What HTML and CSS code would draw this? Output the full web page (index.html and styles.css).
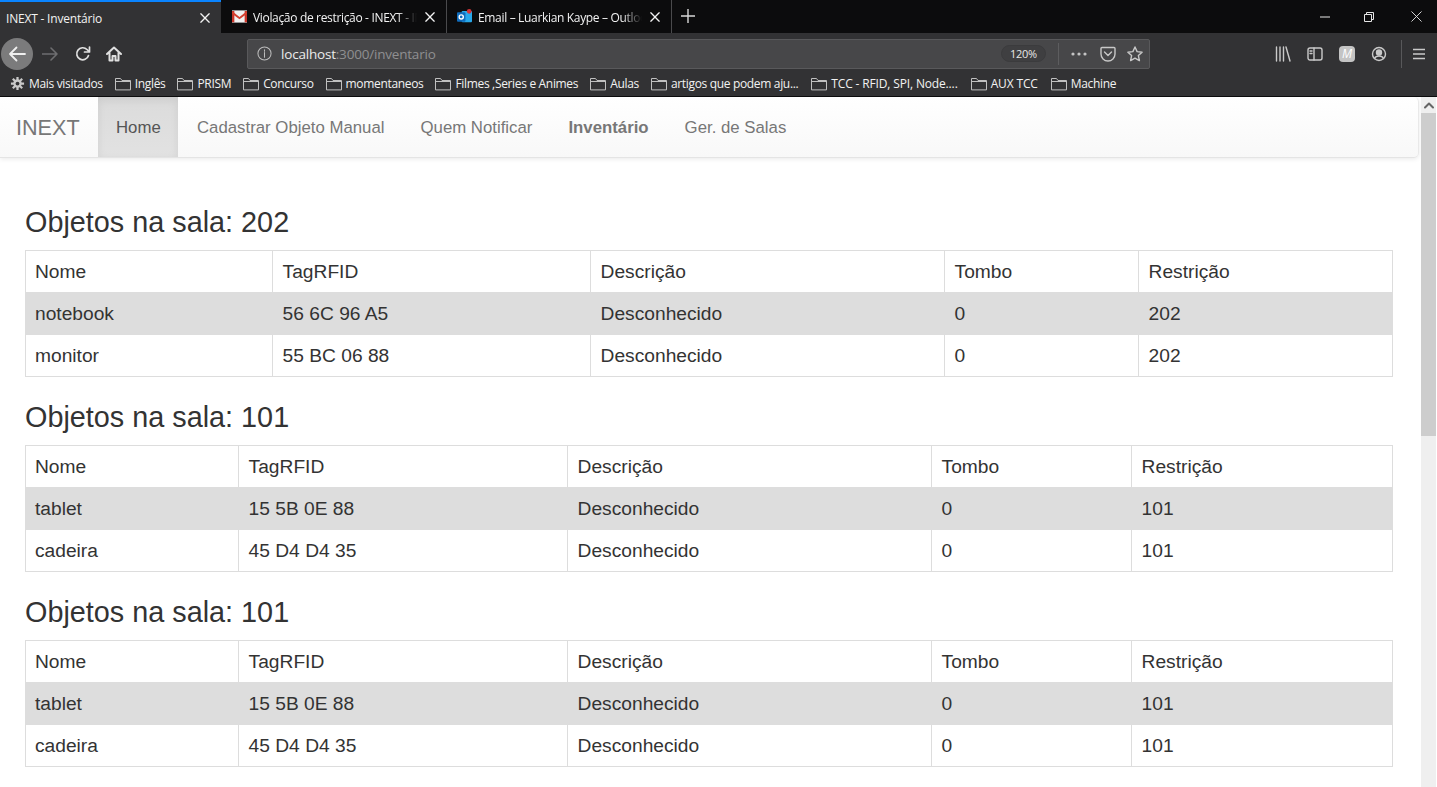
FILE: index.html
```html
<!DOCTYPE html>
<html lang="pt-BR">

<head>
    <meta charset="UTF-8">
    <title>INEXT - Inventário</title>
    <link rel="stylesheet" href="styles.css">
</head>

<body>
    <header class="browser">
        <div class="tabstrip">
            <div class="tab tab-active">
                <span class="tab-title">INEXT - Inventário</span>
                <svg class="tab-close" viewBox="0 0 12 12"><path d="M1 1l10 10M11 1L1 11"/></svg>
            </div>
            <div class="tab tab-second">
                <svg class="favicon" viewBox="0 0 16 14">
                    <rect width="16" height="13" y="0.5" fill="#f2f2f2"/>
                    <path d="M0 1h2.500v12H0zM13.500 1H16v12h-2.500z" fill="#c9362a"/>
                    <path d="M0 1l8 6.500L16 1v3L8 10 0 4z" fill="#d5402f"/>
                </svg>
                <span class="tab-title">Violação de restrição - INEXT - INEXT</span>
                <svg class="tab-close" viewBox="0 0 12 12"><path d="M1 1l10 10M11 1L1 11"/></svg>
            </div>
            <div class="tab tab-third">
                <svg class="favicon" viewBox="0 0 16 16">
                    <rect x="5" y="2" width="11" height="12" rx="1" fill="#28a8ea"/>
                    <rect x="0" y="3.500" width="9" height="10" rx="1" fill="#0f6cbd"/>
                    <circle cx="4.500" cy="8.500" r="2.200" fill="none" stroke="#fff" stroke-width="1.500"/>
                    <circle cx="13" cy="2.500" r="2.500" fill="#d13438"/>
                </svg>
                <span class="tab-title">Email – Luarkian Kaype – Outlook</span>
                <svg class="tab-close" viewBox="0 0 12 12"><path d="M1 1l10 10M11 1L1 11"/></svg>
            </div>
            <svg class="new-tab" viewBox="0 0 14 14"><path d="M7 0v14M0 7h14"/></svg>
            <div class="window-controls">
                <svg class="win-min" viewBox="0 0 10 10"><path d="M0 5h10"/></svg>
                <svg class="win-restore" viewBox="0 0 10 10"><path d="M.5 2.500h7v7h-7zM2.500 2.500v-2h7v7h-2"/></svg>
                <svg class="win-close" viewBox="0 0 12 12"><path d="M.5.5l11 11M11.500.5l-11 11"/></svg>
            </div>
        </div>

        <div class="toolbar">
            <div class="back-button">
                <svg viewBox="0 0 18 16"><path d="M17 8H2M8.500 1.500L2 8l6.500 6.500"/></svg>
            </div>
            <svg class="forward-icon" viewBox="0 0 16 14"><path d="M0 7h15M9 1l6 6-6 6"/></svg>
            <svg class="reload-icon" viewBox="0 0 16 16"><path d="M13.500 9.500A6 6 0 1 1 12 3.500L14 5.500M14.500 1v5h-5"/></svg>
            <svg class="home-icon" viewBox="0 0 16 16"><path d="M1 8l7-6.500L15 8M3.500 6.500V14.500H6.500V10h3v4.500h3V6.500"/></svg>

            <div class="urlbar">
                <svg class="info-icon" viewBox="0 0 16 16">
                    <circle cx="8" cy="8" r="7"/>
                    <path d="M8 7v5M8 4v1.500"/>
                </svg>
                <span class="url"><span class="url-host">localhost</span>:3000/inventario</span>
                <span class="zoom-badge">120%</span>
                <span class="urlbar-divider"></span>
                <svg class="dots-icon" viewBox="0 0 16 4">
                    <circle cx="2" cy="2" r="1.600"/><circle cx="8" cy="2" r="1.600"/><circle cx="14" cy="2" r="1.600"/>
                </svg>
                <svg class="pocket-icon" viewBox="0 0 16 16">
                    <path d="M1 2.500a1 1 0 0 1 1-1h12a1 1 0 0 1 1 1V8a7 7 0 0 1-14 0zM4.500 6L8 9.500 11.500 6"/>
                </svg>
                <svg class="star-icon" viewBox="0 0 16 16">
                    <path d="M8 1l2.100 4.600 5 .6-3.700 3.400 1 5L8 12.100 3.600 14.600l1-5L.9 6.200l5-.6z"/>
                </svg>
            </div>

            <div class="toolbar-right">
                <svg class="library-icon" viewBox="0 0 16 16"><path d="M1.500 1v14M5 1v14M8.500 1v14M11 1l4 14"/></svg>
                <svg class="sidebar-icon" viewBox="0 0 16 16">
                    <rect x="1" y="2" width="14" height="12" rx="2"/>
                    <path d="M7 2v12M3 5h2M3 7.500h2"/>
                </svg>
                <div class="avatar">M</div>
                <svg class="account-icon" viewBox="0 0 16 16">
                    <circle cx="8" cy="8" r="6.500"/>
                    <circle class="account-head" cx="8" cy="6.500" r="2.500"/>
                    <path d="M3.500 12.500c1-2 2.500-2.500 4.500-2.500s3.500.5 4.500 2.500"/>
                </svg>
                <span class="toolbar-divider"></span>
                <svg class="menu-icon" viewBox="0 0 12 12"><path d="M0 1.500h12M0 6h12M0 10.500h12"/></svg>
            </div>
        </div>

        <div class="bookmarks">
            <span class="bookmark">
                <svg class="gear-icon" viewBox="0 0 16 16">
                    <path d="M8 1v14M1 8h14M3 3l10 10M13 3L3 13"/>
                    <circle class="gear-body" cx="8" cy="8" r="4.500"/>
                    <circle class="gear-hole" cx="8" cy="8" r="2"/>
                </svg>Mais visitados
            </span>
            <span class="bookmark"><svg class="folder-icon" viewBox="0 0 16 14"><path d="M.5 12.500v-11h5l1.500 2h8.500v9zM.5 4.500h15"/></svg>Inglês</span>
            <span class="bookmark"><svg class="folder-icon" viewBox="0 0 16 14"><path d="M.5 12.500v-11h5l1.500 2h8.500v9zM.5 4.500h15"/></svg>PRISM</span>
            <span class="bookmark"><svg class="folder-icon" viewBox="0 0 16 14"><path d="M.5 12.500v-11h5l1.500 2h8.500v9zM.5 4.500h15"/></svg>Concurso</span>
            <span class="bookmark"><svg class="folder-icon" viewBox="0 0 16 14"><path d="M.5 12.500v-11h5l1.500 2h8.500v9zM.5 4.500h15"/></svg>momentaneos</span>
            <span class="bookmark"><svg class="folder-icon" viewBox="0 0 16 14"><path d="M.5 12.500v-11h5l1.500 2h8.500v9zM.5 4.500h15"/></svg>Filmes ,Series e Animes</span>
            <span class="bookmark"><svg class="folder-icon" viewBox="0 0 16 14"><path d="M.5 12.500v-11h5l1.500 2h8.500v9zM.5 4.500h15"/></svg>Aulas</span>
            <span class="bookmark"><svg class="folder-icon" viewBox="0 0 16 14"><path d="M.5 12.500v-11h5l1.500 2h8.500v9zM.5 4.500h15"/></svg>artigos que podem aju...</span>
            <span class="bookmark bookmark-gap bookmark-wide"><svg class="folder-icon" viewBox="0 0 16 14"><path d="M.5 12.500v-11h5l1.500 2h8.500v9zM.5 4.500h15"/></svg>TCC - RFID, SPI, Node....</span>
            <span class="bookmark bookmark-gap bookmark-wide"><svg class="folder-icon" viewBox="0 0 16 14"><path d="M.5 12.500v-11h5l1.500 2h8.500v9zM.5 4.500h15"/></svg>AUX TCC</span>
            <span class="bookmark bookmark-gap"><svg class="folder-icon" viewBox="0 0 16 14"><path d="M.5 12.500v-11h5l1.500 2h8.500v9zM.5 4.500h15"/></svg>Machine</span>
        </div>
    </header>

    <div class="viewport">
        <div class="page">
            <nav class="navbar">
                <a class="brand">INEXT</a>
                <a class="nav-link nav-current">Home</a>
                <a class="nav-link">Cadastrar Objeto Manual</a>
                <a class="nav-link">Quem Notificar</a>
                <a class="nav-link nav-bold">Inventário</a>
                <a class="nav-link">Ger. de Salas</a>
            </nav>

            <main class="content">
                <h3>Objetos na sala: 202</h3>
                <table class="room-table room-a">
                    <colgroup><col><col><col><col><col></colgroup>
                    <tr><td>Nome</td><td>TagRFID</td><td>Descrição</td><td>Tombo</td><td>Restrição</td></tr>
                    <tr><td>notebook</td><td>56 6C 96 A5</td><td>Desconhecido</td><td>0</td><td>202</td></tr>
                    <tr><td>monitor</td><td>55 BC 06 88</td><td>Desconhecido</td><td>0</td><td>202</td></tr>
                </table>

                <h3>Objetos na sala: 101</h3>
                <table class="room-table room-b">
                    <colgroup><col><col><col><col><col></colgroup>
                    <tr><td>Nome</td><td>TagRFID</td><td>Descrição</td><td>Tombo</td><td>Restrição</td></tr>
                    <tr><td>tablet</td><td>15 5B 0E 88</td><td>Desconhecido</td><td>0</td><td>101</td></tr>
                    <tr><td>cadeira</td><td>45 D4 D4 35</td><td>Desconhecido</td><td>0</td><td>101</td></tr>
                </table>

                <h3>Objetos na sala: 101</h3>
                <table class="room-table room-b">
                    <colgroup><col><col><col><col><col></colgroup>
                    <tr><td>Nome</td><td>TagRFID</td><td>Descrição</td><td>Tombo</td><td>Restrição</td></tr>
                    <tr><td>tablet</td><td>15 5B 0E 88</td><td>Desconhecido</td><td>0</td><td>101</td></tr>
                    <tr><td>cadeira</td><td>45 D4 D4 35</td><td>Desconhecido</td><td>0</td><td>101</td></tr>
                </table>
            </main>
        </div>

        <div class="scrollbar">
            <div class="scroll-up">
                <svg viewBox="0 0 10 8"><path d="M1 6.500l4-4 4 4"/></svg>
            </div>
            <div class="scroll-thumb"></div>
        </div>
    </div>
</body>

</html>
```

FILE: styles.css
```css
html,
body {
    margin: 0;
    height: 100%;
    overflow: hidden;
}

body {
    display: flex;
    flex-direction: column;
    background-color: #fff;
    font-family: "Liberation Sans", Arial, sans-serif;
}

svg {
    display: block;
    flex: none;
    fill: none;
    stroke-linecap: round;
    stroke-linejoin: round;
}

/* browser chrome */

.browser {
    flex: none;
    height: 97px;
    box-sizing: border-box;
    border-bottom: 1px solid #0c0c0d;
    background-color: #323234;
    font-family: "Open Sans", sans-serif;
    color: #f2f2f2;
}

.tabstrip {
    display: flex;
    align-items: stretch;
    height: 33px;
    background-color: #0c0c0d;
}

.tab {
    display: flex;
    align-items: center;
    box-sizing: border-box;
    font-size: 12px;
    letter-spacing: -0.33px;
}

.tab-active {
    width: 221px;
    padding: 0 11px 0 6px;
    border-top: 2px solid #0a84ff;
    background-color: #323234;
    letter-spacing: -0.2px;
}

.tab-second {
    width: 226px;
    padding: 0 11px 0 11px;
    border-right: 1px solid #4a4a4c;
}

.tab-third {
    width: 225px;
    padding: 0 11px 0 10px;
    border-right: 1px solid #4a4a4c;
}

.tab-title {
    flex: 1;
    min-width: 0;
    overflow: hidden;
    white-space: nowrap;
    padding-top: 1px;
}

.tab-second .tab-title,
.tab-third .tab-title {
    -webkit-mask-image: linear-gradient(to right, #000 88%, transparent 100%);
    mask-image: linear-gradient(to right, #000 88%, transparent 100%);
}

.favicon {
    width: 15px;
    height: 15px;
    margin-right: 6px;
}

.tab-close {
    width: 10px;
    height: 10px;
    margin-left: 8px;
    stroke: #f2f2f2;
    stroke-width: 1.6;
}

.new-tab {
    width: 14px;
    height: 14px;
    margin: 9px 0 0 9px;
    stroke: #d8d8d8;
    stroke-width: 1.4;
}

.window-controls {
    display: flex;
    align-items: center;
    margin-left: auto;
    padding-right: 15px;
}

.window-controls svg {
    stroke: #e6e6e6;
    stroke-width: 1;
    stroke-linecap: butt;
    stroke-linejoin: miter;
}

.win-min {
    width: 10px;
    height: 10px;
}

.win-restore {
    width: 10px;
    height: 10px;
    margin-left: 34px;
}

.win-close {
    width: 11px;
    height: 11px;
    margin-left: 37px;
}

.toolbar {
    display: flex;
    align-items: center;
    box-sizing: border-box;
    height: 38px;
    padding-top: 3px;
}

.back-button {
    display: flex;
    align-items: center;
    justify-content: center;
    width: 32px;
    height: 32px;
    margin-left: 1px;
    border-radius: 50%;
    background-color: #7b7b7c;
}

.back-button svg {
    width: 18px;
    height: 16px;
    stroke: #f0f0f0;
    stroke-width: 1.8;
}

.forward-icon {
    width: 16px;
    height: 14px;
    margin-left: 9px;
    stroke: #6e6e70;
    stroke-width: 1.6;
}

.reload-icon {
    width: 16px;
    height: 16px;
    margin-left: 17px;
    stroke: #e0e0e0;
    stroke-width: 1.7;
}

.home-icon {
    width: 16px;
    height: 16px;
    margin-left: 15px;
    stroke: #e0e0e0;
    stroke-width: 2;
}

.urlbar {
    display: flex;
    align-items: center;
    box-sizing: border-box;
    width: 903px;
    height: 30px;
    margin-left: 125px;
    padding: 0 6px 0 9px;
    border: 1px solid #59595b;
    border-radius: 2px;
    background-color: #474749;
}

.info-icon {
    width: 15px;
    height: 15px;
    stroke: #bdbdbd;
    stroke-width: 1.1;
}

.url {
    flex: 1;
    margin-left: 9px;
    font-size: 13.5px;
    letter-spacing: -0.2px;
    color: #8f8f91;
}

.url-host {
    color: #ececec;
}

.zoom-badge {
    box-sizing: border-box;
    width: 45px;
    height: 17px;
    border: 1px solid #3b3b3d;
    border-radius: 9px;
    background-color: #3f3f41;
    font-size: 11px;
    letter-spacing: -0.3px;
    line-height: 15px;
    text-align: center;
    color: #e8e8e8;
}

.urlbar-divider {
    width: 1px;
    height: 22px;
    margin-left: 12px;
    background-color: #5d5d5f;
}

.dots-icon {
    width: 16px;
    height: 4px;
    margin-left: 12px;
    fill: #c4c4c4;
}

.pocket-icon {
    width: 16px;
    height: 16px;
    margin-left: 13px;
    stroke: #c8c8c8;
    stroke-width: 1.4;
}

.star-icon {
    width: 16px;
    height: 16px;
    margin-left: 11px;
    stroke: #c8c8c8;
    stroke-width: 1.4;
}

.toolbar-right {
    display: flex;
    align-items: center;
    margin-left: 125px;
}

.toolbar-right svg {
    stroke: #c9c9c9;
    stroke-width: 1.4;
}

.library-icon {
    width: 16px;
    height: 16px;
}

.sidebar-icon {
    width: 16px;
    height: 16px;
    margin-left: 16px;
}

.avatar {
    width: 16px;
    height: 16px;
    margin-left: 16px;
    border-radius: 4px;
    background-color: #c4c4c4;
    font-size: 12px;
    font-style: italic;
    line-height: 16px;
    text-align: center;
    color: #fff;
}

.account-icon {
    width: 16px;
    height: 16px;
    margin-left: 16px;
}

.account-head {
    fill: #c9c9c9;
}

.toolbar-divider {
    width: 1px;
    height: 28px;
    margin-left: 14px;
    background-color: #58585a;
}

.menu-icon {
    width: 12px;
    height: 12px;
    margin-left: 11px;
}

.bookmarks {
    display: flex;
    align-items: center;
    gap: 12px;
    height: 25px;
    padding-left: 10px;
    font-size: 12px;
    letter-spacing: -0.33px;
}

.bookmark {
    display: flex;
    align-items: center;
    gap: 4px;
    white-space: nowrap;
}

.bookmark-gap {
    margin-left: 1px;
}

.bookmark-wide {
    letter-spacing: -0.15px;
}

.gear-icon {
    width: 15px;
    height: 15px;
    stroke: #c8c8c8;
    stroke-width: 2.4;
    stroke-linecap: butt;
}

.gear-body {
    fill: #c8c8c8;
    stroke: none;
}

.gear-hole {
    fill: #323234;
    stroke: none;
}

.folder-icon {
    width: 16px;
    height: 14px;
    stroke: #c0c0c0;
    stroke-width: 1;
}

/* page */

.viewport {
    display: flex;
    flex: 1;
    min-height: 0;
}

.page {
    flex: 1;
    min-width: 0;
    overflow: hidden;
}

.navbar {
    display: flex;
    align-items: stretch;
    box-sizing: border-box;
    width: 1419px;
    height: 61px;
    border-right: 1px solid #e9e9e9;
    border-bottom: 1px solid #e4e4e4;
    border-radius: 0 5px 5px 0;
    background-image: linear-gradient(to bottom, #fff 0, #f8f8f8 100%);
    box-shadow: 0 1px 5px rgba(0, 0, 0, 0.09);
}

.brand {
    width: 98px;
    box-sizing: border-box;
    padding: 1px 0 0 16px;
    font-size: 21.6px;
    line-height: 60px;
    color: #777;
}

.nav-link {
    padding: 1px 18px 0;
    font-size: 16.8px;
    line-height: 60px;
    color: #777;
}

.nav-current {
    width: 80px;
    box-sizing: border-box;
    background-image: linear-gradient(to bottom, #dbdbdb 0, #e2e2e2 100%);
    box-shadow: inset 0 3px 9px rgba(0, 0, 0, 0.075);
    color: #555;
}

.nav-current + .nav-link {
    padding-left: 19px;
}

.nav-bold {
    font-weight: bold;
}

.content {
    padding: 0 28px 0 25px;
}

h3 {
    height: 37px;
    margin: 0 0 9px;
    padding: 22px 0 0;
    font-size: 28.8px;
    font-weight: normal;
    line-height: 37px;
    color: #333;
}

h3:first-child {
    padding-top: 46px;
}

.room-table {
    width: 1367px;
    border-collapse: collapse;
    table-layout: fixed;
    color: #333;
}

.room-table td {
    height: 42px;
    box-sizing: border-box;
    padding: 0 9.6px;
    border: 1px solid #ddd;
    font-size: 19.2px;
}

.room-table td:first-child {
    padding-left: 9px;
}

.room-table tr:nth-child(2) td {
    background-color: #ddd;
}

.room-a col:nth-child(1) { width: 247px; }
.room-a col:nth-child(2) { width: 318px; }
.room-a col:nth-child(3) { width: 354px; }
.room-a col:nth-child(4) { width: 194px; }
.room-a col:nth-child(5) { width: 254px; }

.room-b col:nth-child(1) { width: 213px; }
.room-b col:nth-child(2) { width: 329px; }
.room-b col:nth-child(3) { width: 364px; }
.room-b col:nth-child(4) { width: 200px; }
.room-b col:nth-child(5) { width: 261px; }

/* page scrollbar */

.scrollbar {
    flex: none;
    width: 15px;
    margin-right: 1px;
    background-color: #efefef;
}

.scroll-up {
    display: flex;
    align-items: center;
    justify-content: center;
    height: 16px;
}

.scroll-up svg {
    width: 10px;
    height: 8px;
    stroke: #666;
    stroke-width: 2;
}

.scroll-thumb {
    height: 323px;
    background-color: #cdcdcd;
}
```
